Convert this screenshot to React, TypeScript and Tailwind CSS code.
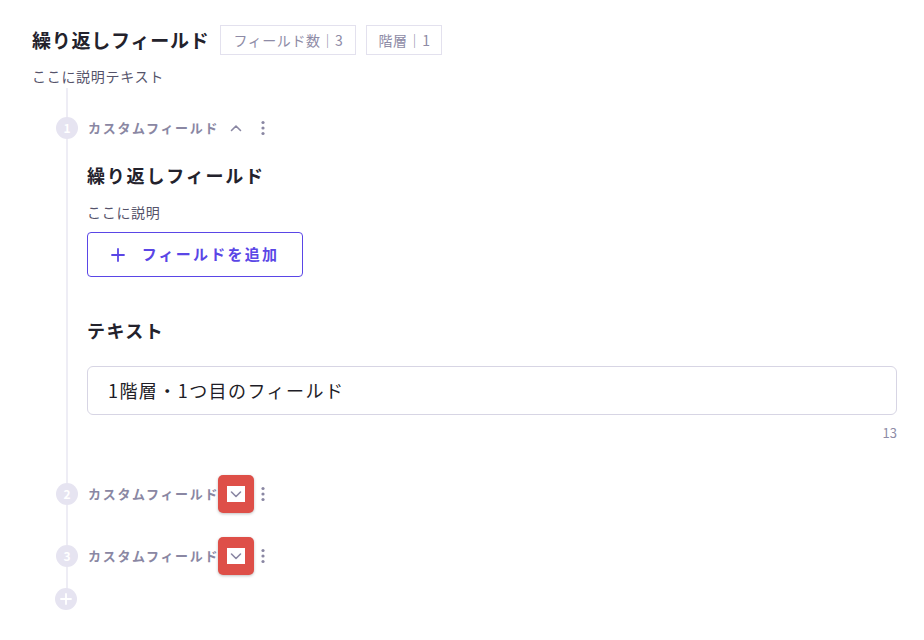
import React from "react";

const font = { fontFamily: '"Noto Sans CJK JP", "Noto Sans", sans-serif' };

function Dots() {
  return (
    <svg width="4" height="16" viewBox="0 0 4 16" className="text-[#8a87a3]">
      <circle cx="2" cy="2.5" r="1.6" fill="currentColor" />
      <circle cx="2" cy="8" r="1.6" fill="currentColor" />
      <circle cx="2" cy="13.5" r="1.6" fill="currentColor" />
    </svg>
  );
}

function Chevron({ up }: { up?: boolean }) {
  return (
    <svg width="12" height="8" viewBox="0 0 12 8" fill="none" stroke="#8a87a3" strokeWidth="1.6" strokeLinecap="round" strokeLinejoin="round">
      {up ? <path d="M1.5 6.5 6 2l4.5 4.5" /> : <path d="M1.5 2 6 6.5 10.5 2" />}
    </svg>
  );
}

function Circle({ n }: { n: number }) {
  return (
    <div className="w-[22px] h-[22px] rounded-full bg-[#e6e4f1] flex items-center justify-center text-white text-[12px] font-bold">
      {n}
    </div>
  );
}

function CollapsedItem({ n }: { n: number }) {
  return (
    <div className="flex items-center h-[22px] relative">
      <div className="ml-[-12px] relative z-10 bg-white rounded-full">
        <Circle n={n} />
      </div>
      <span className="ml-[10px] text-[13px] font-bold text-[#8a87a3] tracking-[0.13em]">カスタムフィールド</span>
      <div className="relative w-[36px] h-[38px] ml-[-1px] rounded-[5px] bg-[#de4f48] shadow-[0_1px_3px_rgba(0,0,0,0.25)] flex items-center justify-center">
        <div className="w-[18px] h-[16px] bg-white flex items-center justify-center">
          <Chevron />
        </div>
      </div>
      <div className="ml-[7px] flex items-center">
        <Dots />
      </div>
    </div>
  );
}

export default function App() {
  return (
    <div className="w-[924px] h-[640px] bg-white text-[#23222c] overflow-hidden" style={font}>
      <div className="pl-[32px] pt-[25px] pr-[27px]">
        <div className="flex items-center">
          <h1 className="text-[19px] font-bold tracking-[0.04em] leading-[30px]">繰り返しフィールド</h1>
          <div className="ml-[11px] h-[30px] px-[12px] border border-[#e3e1ee] flex items-center text-[14px] text-[#8e8ba6] tracking-[0.04em]">
            フィールド数｜3
          </div>
          <div className="ml-[10px] h-[30px] px-[11px] border border-[#e3e1ee] flex items-center text-[14px] text-[#8e8ba6] tracking-[0.04em]">
            階層｜1
          </div>
        </div>
        <p className="mt-[11px] text-[14px] text-[#55536a] leading-[20px] tracking-[0.05em]">ここに説明テキスト</p>

        <div className="ml-[34px] mt-[2px] border-l-2 border-[#eeedf5] pt-[29px] pb-[31px]">
          {/* item 1 */}
          <div className="flex items-center h-[22px]">
            <div className="ml-[-12px]">
              <Circle n={1} />
            </div>
            <span className="ml-[10px] text-[13px] font-bold text-[#8a87a3] tracking-[0.13em]">カスタムフィールド</span>
            <div className="ml-[11px] flex items-center">
              <Chevron up />
            </div>
            <div className="ml-[19px] flex items-center">
              <Dots />
            </div>
          </div>

          <div className="pl-[19px]">
            <h2 className="mt-[22px] text-[18px] font-bold tracking-[0.1em] leading-[28px]">繰り返しフィールド</h2>
            <p className="mt-[13px] text-[14px] text-[#55536a] leading-[20px] tracking-[0.05em]">ここに説明</p>
            <button className="mt-[10px] w-[216px] h-[45px] border border-[#5a46e6] rounded-[4px] flex items-center justify-center text-[#5a46e6] text-[15px] font-bold">
              <svg width="14" height="14" viewBox="0 0 14 14" stroke="#5a46e6" strokeWidth="1.8" strokeLinecap="round">
                <path d="M7 1v12M1 7h12" />
              </svg>
              <span className="ml-[17px] tracking-[0.15em]">フィールドを追加</span>
            </button>

            <h2 className="mt-[39px] text-[18px] font-bold tracking-[0.08em] leading-[28px]">テキスト</h2>
            <div className="mt-[22px] h-[49px] border border-[#d7d5e4] rounded-[6px] flex items-center pl-[20px] text-[18px] text-[#1e1d27] tracking-[0.08em]">
              1階層・1つ目のフィールド
            </div>
            <div className="mt-[9px] text-right text-[13px] text-[#8e8ba6] leading-[18px]">13</div>
          </div>

          <div className="mt-[41px]">
            <CollapsedItem n={2} />
          </div>
          <div className="mt-[40px]">
            <CollapsedItem n={3} />
          </div>
        </div>
        <div className="ml-[23px] mt-[-10px] relative">
          <div className="w-[22px] h-[22px] rounded-full bg-[#e6e4f1] flex items-center justify-center">
            <svg width="12" height="12" viewBox="0 0 12 12" stroke="white" strokeWidth="1.8" strokeLinecap="round">
              <path d="M6 1v10M1 6h10" />
            </svg>
          </div>
        </div>
      </div>
    </div>
  );
}
